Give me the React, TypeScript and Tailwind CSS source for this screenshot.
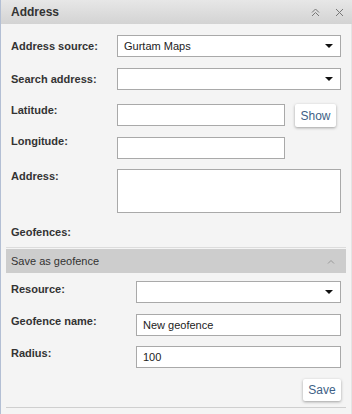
import type { ReactNode } from 'react';

const font = { fontFamily: '"Liberation Sans", Arial, sans-serif' };

function Caret() {
  return (
    <svg width="8" height="4" viewBox="0 0 8 4" className="shrink-0">
      <path d="M0 0h8L4 4z" fill="#111" />
    </svg>
  );
}

function Select({ value = '', className = '' }: { value?: string; className?: string }) {
  return (
    <div
      className={`flex h-[22px] items-center justify-between border border-[#a9a9a9] bg-white pl-[6px] pr-[7px] text-[11px] text-[#222] ${className}`}
    >
      <span>{value}</span>
      <Caret />
    </div>
  );
}

function Input({ value = '', className = '' }: { value?: string; className?: string }) {
  return (
    <div
      className={`flex h-[22px] items-center border border-[#a9a9a9] bg-white px-[6px] text-[11px] text-[#222] ${className}`}
    >
      {value}
    </div>
  );
}

function Button({ children, className = '' }: { children: ReactNode; className?: string }) {
  return (
    <div
      className={`flex items-center justify-center rounded-[2px] bg-white text-[12px] text-[#3e5f86] shadow-[0_1px_3px_rgba(0,0,0,0.35)] ${className}`}
    >
      {children}
    </div>
  );
}

function Row({
  label,
  labelW,
  labelMt,
  className = '',
  children,
}: {
  label: string;
  labelW: string;
  labelMt: string;
  className?: string;
  children: ReactNode;
}) {
  return (
    <div className={`flex items-start ${className}`}>
      <div className={`${labelW} ${labelMt} shrink-0 pl-[5px] text-[11px] font-bold leading-[13px] text-[#333]`}>
        {label}
      </div>
      {children}
    </div>
  );
}

export default function App() {
  return (
    <div style={font} className="flex h-[414px] w-[352px] flex-col overflow-hidden border-l border-[#b3bfd4] bg-[#f4f4f4]">
      <div className="flex h-[24px] shrink-0 items-center justify-between bg-gradient-to-b from-[#e7e7e7] to-[#d3d3d3] pl-[10px] pr-[8px]">
        <span className="text-[12px] font-bold text-[#333]">Address</span>
        <div className="flex items-center gap-[15px]">
          <svg width="9" height="9" viewBox="0 0 9 9" fill="none" stroke="#777" strokeWidth="1">
            <path d="M1 4.5l3.5-3.5L8 4.5M1 8l3.5-3.5L8 8" />
          </svg>
          <svg width="9" height="9" viewBox="0 0 9 9" fill="none" stroke="#777" strokeWidth="1">
            <path d="M1 1l7 7M8 1L1 8" />
          </svg>
        </div>
      </div>

      <div className="flex flex-1 flex-col border-r border-[#e4e4e4] px-[5px] pr-[5px]">
        <Row label="Address source:" labelW="w-[111px]" labelMt="mt-[5px]" className="mt-[11px]">
          <Select value="Gurtam Maps" className="w-[224px]" />
        </Row>
        <Row label="Search address:" labelW="w-[111px]" labelMt="mt-[5px]" className="mt-[11px]">
          <Select className="w-[224px]" />
        </Row>
        <Row label="Latitude:" labelW="w-[111px]" labelMt="mt-[0px]" className="mt-[14px]">
          <Input className="w-[168px]" />
          <Button className="ml-[10px] h-[23px] w-[41px]">Show</Button>
        </Row>
        <Row label="Longitude:" labelW="w-[111px]" labelMt="mt-[-2px]" className="mt-[10px]">
          <Input className="h-[21px] w-[168px]" />
        </Row>
        <Row label="Address:" labelW="w-[111px]" labelMt="mt-[1px]" className="mt-[10px]">
          <div className="h-[44px] w-[224px] border border-[#a9a9a9] bg-white" />
        </Row>
        <div className="mt-[13px] pl-[5px] text-[11px] font-bold leading-[13px] text-[#333]">Geofences:</div>

        <div className="mt-[8px] h-px bg-[#dcdcdc]" />
        <div className="mt-px flex h-[24px] items-center justify-between bg-[#cdcdcd] pl-[5px] pr-[11px] text-[11px] text-[#333]">
          <span>Save as geofence</span>
          <svg width="8" height="5" viewBox="0 0 8 5" fill="none" stroke="#999" strokeWidth="1">
            <path d="M1 4.5l3-3 3 3" />
          </svg>
        </div>

        <Row label="Resource:" labelW="w-[130px]" labelMt="mt-[2px]" className="mt-[8px]">
          <Select className="h-[21px] w-[205px]" />
        </Row>
        <Row label="Geofence name:" labelW="w-[130px]" labelMt="mt-[1px]" className="mt-[11px]">
          <Input value="New geofence" className="h-[21px] w-[205px]" />
        </Row>
        <Row label="Radius:" labelW="w-[130px]" labelMt="mt-[1px]" className="mt-[10px]">
          <Input value="100" className="h-[21px] w-[205px]" />
        </Row>
        <div className="mt-[11px] flex justify-end pr-[5px]">
          <Button className="h-[22px] w-[38px]">Save</Button>
        </div>
        <div className="mt-[6px] h-px bg-[#cfcfcf]" />
      </div>
    </div>
  );
}
